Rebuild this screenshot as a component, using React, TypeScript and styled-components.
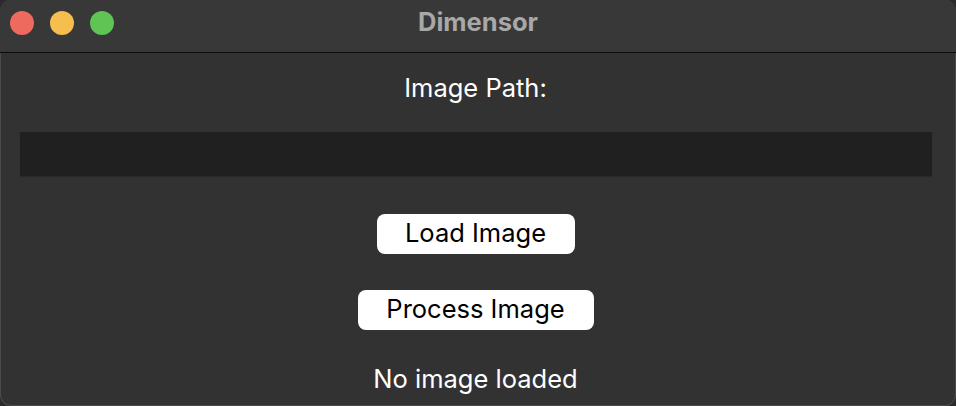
import React from "react";
import styled, { createGlobalStyle } from "styled-components";

const Global = createGlobalStyle`
  html, body { margin: 0; padding: 0; background: #2b2b2b; }
  body { width: 956px; height: 406px; overflow: hidden; }
  * { box-sizing: border-box; }
`;

const Window = styled.div`
  width: 956px;
  height: 406px;
  border-radius: 11px;
  overflow: hidden;
  background: #323232;
  display: flex;
  flex-direction: column;
  font-family: Inter, "Liberation Sans", sans-serif;
  box-shadow: inset 0 0 0 1px rgba(255, 255, 255, 0.12);
`;

const TitleBar = styled.div`
  height: 53px;
  flex: none;
  background: #383838;
  border-bottom: 1px solid #0c0c0c;
  display: flex;
  align-items: center;
  position: relative;
  padding-left: 10px;
  padding-bottom: 6px;
`;

const Lights = styled.div`
  display: flex;
  gap: 16px;
`;

const Light = styled.span<{ $color: string }>`
  width: 24px;
  height: 24px;
  border-radius: 50%;
  background: ${(p) => p.$color};
`;

const Title = styled.div`
  position: absolute;
  left: 0;
  right: 0;
  top: 6px;
  text-align: center;
  color: #a8a8a8;
  font-weight: 700;
  font-size: 25.5px;
  line-height: 32px;
  pointer-events: none;
`;

const Content = styled.div`
  flex: 1;
  display: flex;
  flex-direction: column;
  align-items: center;
  padding: 21px 25px 0 20px;
`;

const Label = styled.div`
  color: #ffffff;
  font-size: 25.5px;
  line-height: 28px;
`;

const Field = styled.div`
  align-self: stretch;
  margin-right: -1px;
  height: 44px;
  margin-top: 30px;
  background: #202020;
  box-shadow: 0 1px 1px rgba(0, 0, 0, 0.15);
`;

const Button = styled.button<{ $width: number; $mt: number }>`
  width: ${(p) => p.$width}px;
  height: 40px;
  margin-top: ${(p) => p.$mt}px;
  background: #ffffff;
  border: none;
  border-radius: 8px;
  color: #000000;
  font-family: inherit;
  font-size: 25.5px;
  line-height: 28px;
  padding: 0 0 3px;
  display: flex;
  align-items: center;
  justify-content: center;
`;

const Status = styled(Label)`
  margin-top: 35px;
`;

export default function App() {
  return (
    <>
      <Global />
      <Window>
        <TitleBar>
          <Lights>
            <Light $color="#ee6a5f" />
            <Light $color="#f5be4f" />
            <Light $color="#5fc454" />
          </Lights>
          <Title>Dimensor</Title>
        </TitleBar>
        <Content>
          <Label>Image Path:</Label>
          <Field />
          <Button $width={198} $mt={38}>Load Image</Button>
          <Button $width={236} $mt={36}>Process Image</Button>
          <Status>No image loaded</Status>
        </Content>
      </Window>
    </>
  );
}
